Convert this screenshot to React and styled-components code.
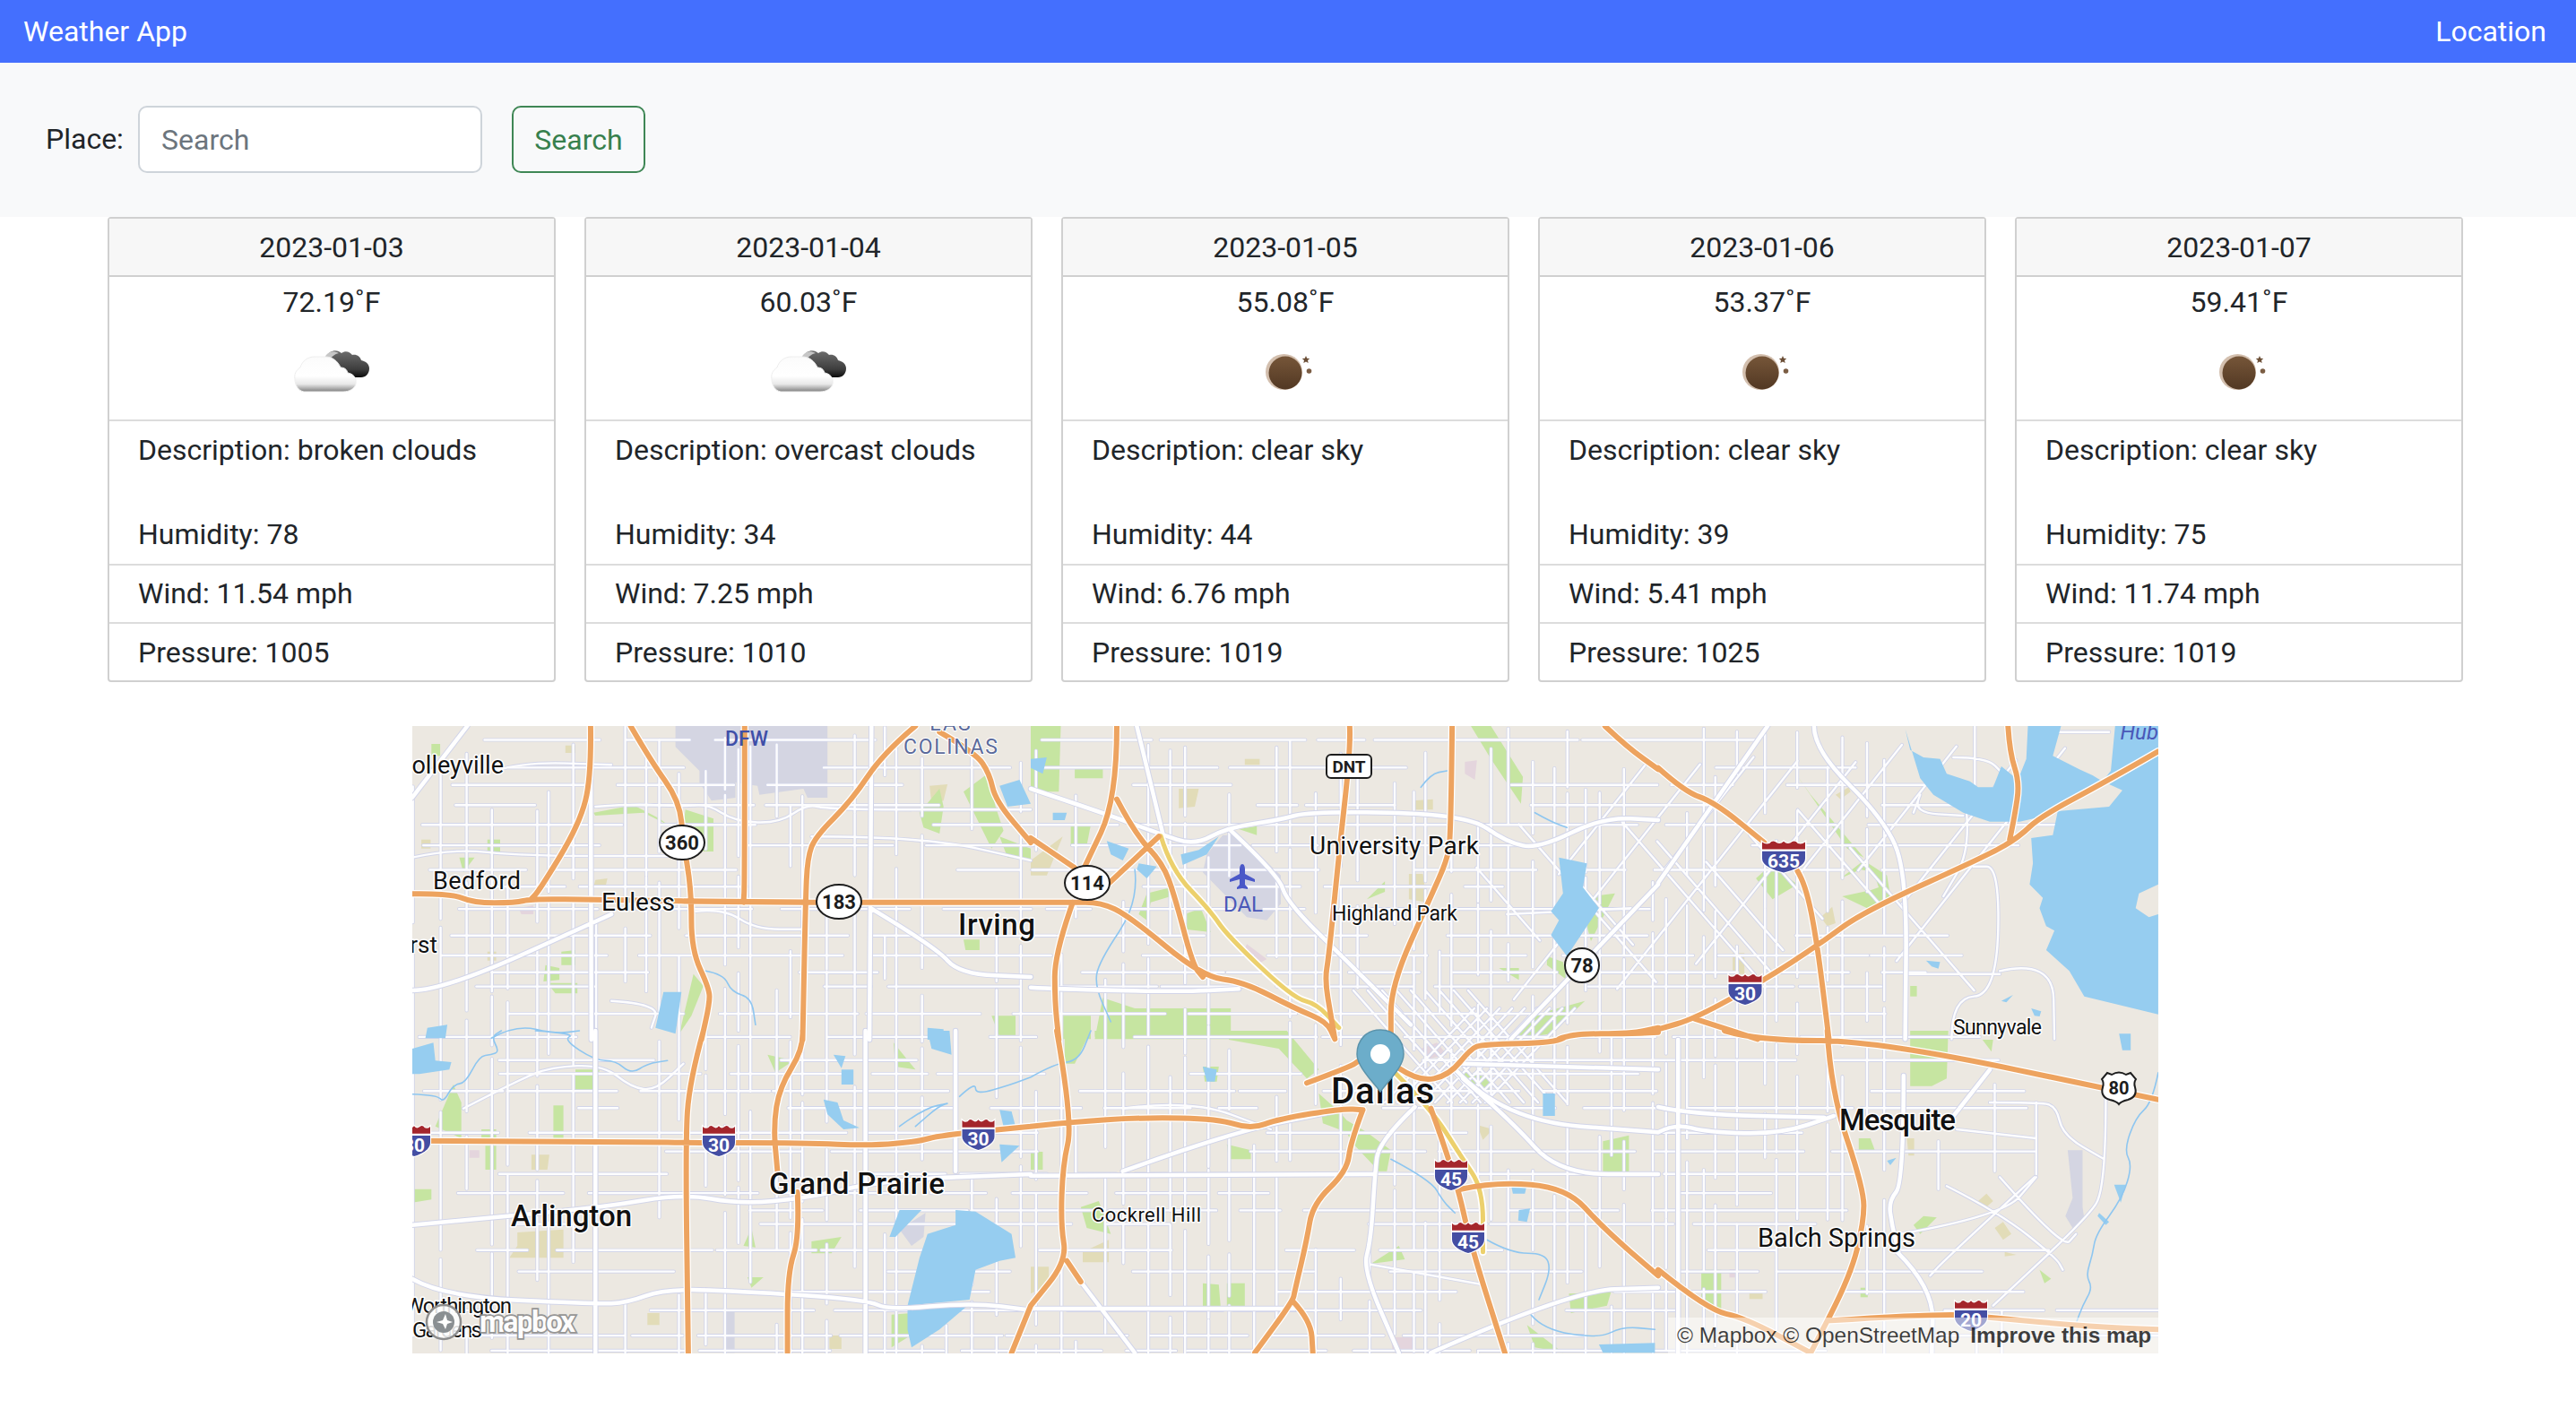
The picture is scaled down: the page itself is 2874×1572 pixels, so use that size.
import React from "react";
import styled, { createGlobalStyle } from "styled-components";

const GlobalStyle = createGlobalStyle`
  html, body {
    margin: 0;
    background: #fff;
    color: #212529;
    font-family: "Roboto", "Liberation Sans", sans-serif;
    font-size: 32px;
  }
  * { box-sizing: border-box; }
`;

const Navbar = styled.nav`
  height: 70px;
  padding: 0 33px 0 26px;
  display: flex;
  align-items: center;
  justify-content: space-between;
  background: #446ffe;
  color: #fff;
`;

const SearchBar = styled.form`
  height: 172px;
  padding: 48px 0 0 51px;
  display: flex;
  align-items: flex-start;
  background: #f8f9fa;
`;

const PlaceLabel = styled.label`
  width: 103px;
  line-height: 75px;
`;

const SearchInput = styled.input`
  width: 384px;
  height: 75px;
  margin-right: 33px;
  padding: 0 24px;
  border: 2px solid #ced4da;
  border-radius: 10px;
  background: #fff;
  font: inherit;
  color: #212529;
  &::placeholder { color: #6c757d; opacity: 1; }
`;

const SearchButton = styled.button`
  width: 149px;
  height: 75px;
  padding: 0;
  border: 2px solid #3f8755;
  border-radius: 10px;
  background: transparent;
  font: inherit;
  color: #37804d;
`;

const Forecast = styled.section`
  padding-left: 120px;
  display: flex;
  gap: 32px;
`;

const Card = styled.article`
  width: 500px;
  border: 2px solid #d0d0d0;
  border-radius: 4px;
`;

const CardHeader = styled.header`
  height: 65px;
  display: flex;
  align-items: center;
  justify-content: center;
  background: #f7f7f7;
  border-bottom: 2px solid #d0d0d0;
`;

const TempBlock = styled.div`
  height: 159px;
  padding-top: 6px;
  display: flex;
  flex-direction: column;
  align-items: center;
`;

const Temp = styled.div`
  line-height: 44px;
`;

const Row = styled.div`
  height: ${p => p.$height}px;
  padding: 0 32px ${p => p.$nudge || 0}px;
  display: flex;
  align-items: center;
  border-top: 2px solid #dcdcdc;
`;

const DetailsRow = styled.div`
  height: 161px;
  padding: 10px 32px 0;
  border-top: 2px solid #dcdcdc;
`;

const Description = styled.div`
  height: 94px;
  line-height: 44px;
`;

const Humidity = styled.div`
  line-height: 44px;
`;

const MapFrame = styled.div`
  position: relative;
  width: 1948px;
  height: 700px;
  margin: 49px 0 62px 460px;
  overflow: hidden;
  background: #ece8e1;
`;

const MapSvg = styled.svg`
  display: block;
`;

const MapLabel = styled.text`
  font-family: "Roboto", "Liberation Sans", sans-serif;
  font-size: ${p => p.$size}px;
  font-weight: ${p => p.$weight || 400};
  fill: ${p => p.$color || "#111"};
  stroke: #fff;
  stroke-width: ${p => p.$halo ?? 3}px;
  stroke-linejoin: round;
  paint-order: stroke;
`;

const ShieldText = styled.text`
  font-family: "Roboto", "Liberation Sans", sans-serif;
  font-size: ${p => p.$size}px;
  font-weight: 700;
  fill: ${p => p.$color};
  text-anchor: middle;
`;

const LogoText = styled.text`
  font-family: "Roboto", "Liberation Sans", sans-serif;
  font-size: 33px;
  font-weight: 700;
  fill: #fff;
  stroke: #8d8d8d;
  stroke-width: 3.5px;
  paint-order: stroke;
  opacity: 0.9;
`;

const Attribution = styled.div`
  position: absolute;
  right: 0;
  bottom: 0;
  width: 547px;
  height: 40px;
  padding-left: 10px;
  display: flex;
  align-items: center;
  gap: 12px;
  background: rgba(255, 255, 255, 0.5);
  font-family: "Liberation Sans", Arial, sans-serif;
  font-size: 24.4px;
  color: rgba(0, 0, 0, 0.75);
  white-space: nowrap;
`;

const ImproveLink = styled.span`
  font-weight: 700;
`;

const forecast = [
  { date: "2023-01-03", temp: "72.19", icon: "clouds", desc: "broken clouds", hum: 78, wind: "11.54", press: 1005 },
  { date: "2023-01-04", temp: "60.03", icon: "clouds", desc: "overcast clouds", hum: 34, wind: "7.25", press: 1010 },
  { date: "2023-01-05", temp: "55.08", icon: "moon", desc: "clear sky", hum: 44, wind: "6.76", press: 1019 },
  { date: "2023-01-06", temp: "53.37", icon: "moon", desc: "clear sky", hum: 39, wind: "5.41", press: 1025 },
  { date: "2023-01-07", temp: "59.41", icon: "moon", desc: "clear sky", hum: 75, wind: "11.74", press: 1019 }
];

const WeatherIcon = ({ kind, id }) => (
  <svg width="110" height="109" viewBox="0 0 110 109">
    <defs>
      <linearGradient id={`cloud${id}`} x1="0" y1="0" x2="0" y2="1">
        <stop offset="0" stopColor="#fbfbfb" />
        <stop offset="0.55" stopColor="#fff" />
        <stop offset="0.78" stopColor="#e9e9e9" />
        <stop offset="0.86" stopColor="#c4c4c4" />
        <stop offset="1" stopColor="#7f7f7f" />
      </linearGradient>
      <linearGradient id={`dark${id}`} x1="0" y1="0" x2="0" y2="1">
        <stop offset="0" stopColor="#6e6e6e" />
        <stop offset="0.7" stopColor="#3d3d3d" />
        <stop offset="1" stopColor="#0c0c0c" />
      </linearGradient>
      <linearGradient id={`moon${id}`} x1="0" y1="0" x2="0" y2="1">
        <stop offset="0" stopColor="#765639" />
        <stop offset="1" stopColor="#523823" />
      </linearGradient>
    </defs>
    {kind === "clouds" ? (
      <>
        <path
          d="M53 34c5-3 10-2 13 1 4-3 9-2 12 2 5-1 9 2 10 6 5 1 9 4 9 9 0 6-4 10-9 10H68c-4-1-8-5-8-10-3-2-7-1-10 2-2 1-4 2-5 1 0-8 3-16 8-21z"
          fill={`url(#dark${id})`}
        />
        <path d="M49 37c3-4 9-5 14-2-5 1-10 5-12 12l-5 6c-1-6 0-12 3-16z" fill="#c6c6c6" />
        <path
          d="M36 39c-8 0-14 5-16 12-5 3-7 8-6 13 0 7 4 13 10 14h44c6 0 13-3 14-9 1-7-3-11-9-12-1-4-4-6-8-6-3-7-9-12-17-12-4 0-8 0-12 0z"
          fill={`url(#cloud${id})`}
          stroke="#eeeeee"
          strokeWidth="1"
        />
      </>
    ) : (
      <>
        <ellipse cx="53.5" cy="56" rx="20.5" ry="20" fill="#d3bfae" />
        <ellipse cx="55" cy="57" rx="18.5" ry="18.5" fill={`url(#moon${id})`} />
        <path d="M78 38l1.2 2.8 3 .3-2.2 2 .7 3-2.7-1.6-2.7 1.6.7-3-2.2-2 3-.3z" fill="#6b4e36" />
        <circle cx="81.5" cy="55" r="2.8" fill="#7b5d44" />
      </>
    )}
  </svg>
);

/* reference crops the map was traced from: origin x, origin y, scale x, scale y */
const CROPS = {
  A: [450, 800, 2.24, 3],
  B: [1150, 800, 2.24, 3],
  C: [1850, 800, 2.703, 3],
  D: [450, 1150, 2.24, 3],
  E: [1150, 1150, 2.24, 3],
  F: [1850, 1150, 2.703, 3]
};

const parsePoints = (crop, text) => {
  const [ox, oy, sx, sy] = CROPS[crop];
  return text.split(" ").map(pair => {
    const [x, y] = pair.split(",").map(Number);
    return [+(ox + x / sx).toFixed(1), +(oy + y / sy).toFixed(1)];
  });
};

const roadPath = ([crop, text]) => {
  const pts = parsePoints(crop, text);
  let d = `M${pts[0]}`;
  for (let i = 1; i < pts.length - 1; i++) {
    const mx = (pts[i][0] + pts[i + 1][0]) / 2;
    const my = (pts[i][1] + pts[i + 1][1]) / 2;
    d += `Q${pts[i]} ${mx},${my}`;
  }
  return d + `L${pts[pts.length - 1]}`;
};

const areaPath = ([crop, text]) => `M${parsePoints(crop, text).join("L")}Z`;

const motorways = [
  ["A", "22,592 120,590 175,622 280,622 320,608 490,612 900,620 1568,620"],
  ["A", "468,30 470,200 440,360 340,580 320,608"],
  ["A", "568,30 620,150 690,280 700,420 720,580 720,780 765,910 765,960 745,1080"],
  ["A", "853,30 853,560 850,620"],
  ["A", "1280,30 1200,120 1120,280 1030,400 1010,470 1005,620 998,1080"],
  ["A", "1340,50 1430,120 1465,190 1480,280 1568,420"],
  ["B", "0,620 100,620 175,620 245,665 430,870 530,885 660,975 740,1020 760,1078"],
  ["B", "0,405 110,505"],
  ["B", "215,30 215,275 135,500"],
  ["B", "215,275 260,390 330,490 360,600 405,830 430,870"],
  ["B", "320,400 180,575"],
  ["B", "105,620 60,790 60,950 70,1080"],
  ["B", "797,30 800,100 770,460 745,800 735,880 750,1000 760,1078"],
  ["B", "1053,30 1050,400 1040,480 1000,600 900,900 900,1078"],
  ["B", "1435,30 1490,100 1568,175"],
  ["B", "1320,1078 1350,1060 1500,1060 1568,1040"],
  ["C", "0,170 80,250 170,285 320,420"],
  ["C", "420,515 445,560 480,760 515,1078"],
  ["C", "1508,115 1360,210 1150,335 1090,400 1000,460 620,650 480,765 320,880 110,1010 0,1045"],
  ["C", "110,1010 300,1078"],
  ["C", "1055,30 1060,120 1090,220 1075,330 1060,410"],
  ["D", "22,368 620,372 700,375 1000,375 1170,385 1290,370 1340,350 1568,320"],
  ["D", "750,0 715,170 705,370 712,1078"],
  ["D", "998,0 1000,60 940,190 925,320 935,470"],
  ["D", "985,540 990,690 960,810 960,1078"],
  ["D", "1568,920 1520,1078"],
  ["E", "65,0 105,305 80,450 75,650 90,770 0,920"],
  ["E", "90,770 125,840"],
  ["E", "0,320 100,305 280,290 470,295 550,330 620,295 780,260 830,265"],
  ["E", "830,265 800,370 790,470 705,580 690,700 660,870 655,905 560,1078"],
  ["E", "655,905 700,970 705,1078"],
  ["E", "1000,260 1060,480 1100,720 1185,1078"],
  ["E", "1075,530 1160,505 1340,525 1430,660 1568,820"],
  ["E", "690,175 800,120 820,100"],
  ["E", "920,125 970,170 1045,150 1100,60 1130,45 1310,40 1350,10 1500,10 1568,5"],
  ["F", "200,0 300,33 660,33 1508,230"],
  ["F", "510,0 520,200 620,530 620,640 580,820 460,1078"],
  ["F", "0,800 150,935 260,960 460,1078"],
  ["F", "520,970 860,945 1000,960 1300,990 1508,1000"]
];

const tollways = [
  ["B", "325,398 350,510 450,650 490,730 655,940 715,960 770,1040"],
  ["E", "910,140 1000,260 1075,420 1130,530 1130,740"]
];

const arterials = [
  ["A", "468,30 470,1080"],
  ["A", "1170,30 1165,1080"],
  ["A", "22,915 100,915 520,660"],
  ["A", "22,270 160,30"],
  ["A", "1168,640 1330,770 1390,860 1568,870"],
  ["B", "0,240 190,325 320,390 410,430 490,370 620,345 700,315 1090,325 1190,420 1270,440 1430,335 1568,345"],
  ["B", "265,30 330,390"],
  ["B", "500,380 620,530 640,620 800,830 950,1030"],
  ["B", "0,905 60,910 370,920 520,910"],
  ["B", "1568,560 1200,1078"],
  ["C", "330,30 0,555"],
  ["C", "470,30 470,110 680,340 750,520 745,1078"],
  ["D", "22,650 260,620 500,590 700,545 840,580 1010,560 1200,500 1568,480"],
  ["D", "22,830 100,890 480,915 560,910 650,865 830,870 1160,900 1210,935 1420,910 1568,935"],
  ["D", "480,0 480,1078"],
  ["D", "1155,0 1155,1078"],
  ["D", "1380,0 1380,470"],
  ["E", "0,485 860,480"],
  ["E", "1065,135 1180,300 1568,340"],
  ["E", "230,470 500,340 760,270"],
  ["E", "960,255 870,370 860,480 850,700 830,800 920,1078"],
  ["E", "0,930 660,930"],
  ["E", "1000,1078 1350,870 1568,860"],
  ["E", "1080,110 1568,130"],
  ["E", "125,840 260,1078"],
  ["E", "1080,160 1200,300 1320,480 1568,480"],
  ["F", "0,255 100,280 500,290"],
  ["F", "0,340 50,310 150,340 370,345 530,285"],
  ["F", "60,30 60,1078"],
  ["F", "720,740 830,860 825,1078"],
  ["F", "740,150 740,510 695,570 705,650 725,740"],
  ["F", "1000,130 880,300"]
];

const localRoads = [
  ["F", "870,520 1030,610 1200,760 1220,800"],
  ["F", "1000,240 1140,240 1200,250 1220,350 1345,430"],
  ["F", "1350,230 1350,530 1290,630 1010,920"],
  ["F", "730,680 1040,620 1140,490"],
  ["F", "1030,490 1220,730 1260,680"],
  ["F", "1135,490 870,760 820,820"],
  ["F", "900,330 1140,360"],
  ["F", "1015,180 1015,470"],
  ["F", "1140,240 1140,480"],
  ["F", "845,370 845,530"],
  ["C", "1030,850 1190,810 1195,1078"],
  ["C", "750,860 1030,860"],
  ["C", "885,1078 885,940 1020,930 1030,500 950,500"],
  ["C", "770,320 800,230 770,320 920,330"],
  ["C", "890,135 990,135 1040,190"],
  ["C", "930,320 940,450 860,600"],
  ["C", "1180,50 1360,50"],
  ["C", "955,30 955,300"],
  ["A", "22,470 120,440 300,465 660,465"],
  ["A", "480,300 575,290 700,300 760,290 830,350 940,355 1010,290 1060,310 1568,310"],
  ["A", "230,180 300,150 520,160"],
  ["A", "730,650 800,640 880,710 1000,710"],
  ["A", "520,950 640,960 620,1040"],
  ["A", "1020,400 1300,400 1568,480"],
  ["B", "1190,660 1500,640"],
  ["E", "840,780 1130,850"],
  ["E", "230,260 400,230 600,330"],
  ["D", "150,260 280,170 370,120 500,115 570,190 630,200 700,110"]
];

const diagonalRoads = (() => {
  let seed = 991;
  const rnd = () => {
    seed = (seed * 16807) % 2147483647;
    return seed / 2147483647;
  };
  const out = [];
  // east Dallas runs at an angle, two crossing families of streets
  for (let k = 0; k < 9; k++) {
    const t = 0.25 + rnd() * 0.3;
    out.push(`M${1830 + k * 58 + rnd() * 14},${830 + rnd() * 30}l${-190 * t * 2},${240 * t * 2}`);
    out.push(`M${1640 + k * 52 + rnd() * 14},${900 + rnd() * 70}l${200 * t * 1.4},${230 * t * 1.4}`);
  }
  // downtown is dense
  for (let k = 0; k < 9; k++) {
    out.push(`M${1510 + k * 16},1105l${110},${125}`);
    out.push(`M${1645 + k * 14},1125l${-100},${105}`);
  }
  return out;
})();

const gridRoads = (() => {
  let seed = 4711;
  const rnd = () => {
    seed = (seed * 16807) % 2147483647;
    return seed / 2147483647;
  };
  const out = [];
  const isSparse = (x, y) => (x > 2110 && y < 1450) || (x > 1950 && y > 1300 && rnd() > 0.5);
  for (let x = 460 + rnd() * 20; x < 2408; x += 12 + rnd() * 22) {
    let y = 810 + rnd() * 100;
    while (y < 1510) {
      const len = 40 + rnd() * 170;
      if (rnd() > 0.22 && !isSparse(x, y)) out.push(`M${x.toFixed(1)},${y.toFixed(1)}V${(y + len).toFixed(1)}`);
      y += len + rnd() * 36;
    }
  }
  for (let y = 815 + rnd() * 20; y < 1510; y += 12 + rnd() * 20) {
    let x = 460 + rnd() * 120;
    while (x < 2408) {
      const len = 40 + rnd() * 190;
      if (rnd() > 0.24 && !isSparse(x, y)) out.push(`M${x.toFixed(1)},${y.toFixed(1)}H${(x + len).toFixed(1)}`);
      x += len + rnd() * 44;
    }
  }
  return out;
})();

const parks = [
  ["A", "210,410 242,410 242,455 210,455"],
  ["A", "140,470 178,470 150,520"],
  ["A", "475,320 575,295 640,340 660,360 600,320 480,330"],
  ["A", "705,310 775,340 775,450 750,450 700,360"],
  ["A", "355,830 390,840 390,880 350,885"],
  ["A", "360,890 435,890 435,925 380,925"],
  ["A", "395,785 430,780 430,830 395,830"],
  ["A", "1290,320 1340,240 1350,300 1340,390 1300,370"],
  ["A", "1400,250 1460,190 1480,300 1500,380 1470,440"],
  ["A", "1490,400 1568,440 1568,480 1510,470"],
  ["A", "1400,745 1440,745 1440,780 1405,780"],
  ["A", "1470,1000 1530,1000 1530,1070 1490,1070"],
  ["A", "725,860 750,900 720,1000 690,1060"],
  ["A", "70,90 92,90 92,130 70,130"],
  ["B", "0,30 75,30 70,250 0,250"],
  ["B", "110,170 180,170 180,205 110,205"],
  ["B", "100,360 150,360 140,430 100,430"],
  ["B", "385,660 425,640 450,720 385,710"],
  ["B", "520,375 565,365 565,395"],
  ["B", "840,610 885,550 885,585"],
  ["B", "1100,30 1150,30 1230,200 1225,290 1150,140"],
  ["B", "1170,840 1220,840 1220,880"],
  ["B", "1290,800 1330,820 1340,880 1290,830"],
  ["B", "1400,600 1460,590 1400,750 1390,700"],
  ["B", "1200,1078 1250,1000 1385,950 1300,1060 1220,1078"],
  ["B", "75,1000 150,1000 150,1078 75,1078"],
  ["B", "180,940 260,975 500,975 500,1078 160,1078"],
  ["B", "270,660 290,590 350,570 350,600 300,620 290,680"],
  ["C", "295,540 340,495 420,560 345,610"],
  ["C", "550,540 620,480 690,530 700,600 630,640 555,600 640,580 665,570 650,520 610,510"],
  ["C", "415,190 460,260 620,470 570,440"],
  ["C", "760,900 780,900 780,935 760,935"],
  ["D", "430,130 490,130 480,205 430,205"],
  ["D", "375,250 400,250 400,360 375,360"],
  ["D", "195,330 232,330 232,360 195,360"],
  ["D", "205,385 232,385 232,465 205,465"],
  ["D", "125,180 145,240 145,360 80,320"],
  ["D", "22,530 70,530 70,565 22,575"],
  ["D", "910,80 975,100 930,140"],
  ["D", "850,720 870,660 880,725"],
  ["D", "1020,705 1095,690 1070,745 1020,745"],
  ["D", "1225,40 1280,130 1230,120"],
  ["D", "860,825 900,825 870,860"],
  ["D", "1220,950 1270,945 1280,1010 1220,1060"],
  ["E", "85,0 150,0 110,110 85,110"],
  ["E", "160,0 370,0 370,20 160,20"],
  ["E", "380,0 490,0 490,25 380,25"],
  ["E", "495,0 640,0 720,130 690,160 620,60 495,30"],
  ["E", "720,210 770,270 790,300 840,340 900,400 890,470 870,470 800,370 790,340 730,310"],
  ["E", "1080,135 1150,160 1150,225 1100,200"],
  ["E", "430,120 470,120 465,170 435,170"],
  ["E", "0,405 30,405 30,465 0,465"],
  ["E", "490,380 550,400 550,430 495,430"],
  ["E", "125,590 170,570 200,680 140,660"],
  ["E", "430,845 470,850 475,935 430,930"],
  ["E", "490,845 535,845 535,925 490,925"],
  ["E", "850,780 920,720 935,765"],
  ["E", "1430,370 1495,350 1495,480 1430,480"],
  ["E", "1345,880 1450,875 1440,920 1350,945"],
  ["E", "1240,985 1330,1078 1260,1060"],
  ["F", "760,0 875,0 870,160 825,185 760,185"],
  ["F", "978,30 1010,30 1005,70"],
  ["F", "130,800 190,800 190,935 130,890"],
  ["F", "605,360 640,360 655,405 605,405"],
  ["F", "800,620 840,625 790,680 770,650"],
  ["F", "1150,800 1185,830 1165,845"],
  ["F", "610,860 632,860 632,892 610,892"]
];

const tans = [
  ["A", "45,410 68,410 68,440 45,440"],
  ["A", "210,785 232,785 232,815 210,815"],
  ["A", "1315,230 1360,225 1350,280 1320,290"],
  ["A", "405,95 430,95 430,120 405,120"],
  ["A", "480,545 510,540 505,570 475,570"],
  ["B", "0,480 80,400 40,530 0,530"],
  ["B", "370,240 420,240 410,300 370,305"],
  ["B", "535,140 572,140 572,160 535,160"],
  ["B", "955,280 1005,275 1005,310 955,310"],
  ["B", "945,525 980,525 990,620 945,610"],
  ["C", "225,790 260,790 260,860 225,860"],
  ["C", "490,670 525,635 535,690 510,700"],
  ["C", "535,260 575,235 580,250 550,275"],
  ["D", "320,415 365,415 360,465 320,465"],
  ["D", "285,675 400,665 400,760 265,760 285,720"],
  ["D", "610,945 640,945 640,985 610,985"],
  ["D", "1065,1020 1095,1020 1095,1065 1065,1065"],
  ["E", "130,740 195,700 195,775 130,775"],
  ["E", "0,790 45,790 45,850 0,880"],
  ["E", "1115,315 1155,330 1130,365"],
  ["F", "965,570 990,545 1010,570 985,595"],
  ["F", "1015,660 1040,640 1065,680 1040,700"],
  ["F", "1045,740 1080,750 1045,755"],
  ["F", "750,360 772,360 772,418 755,418"],
  ["F", "275,868 315,868 315,898 275,898"]
];

const pinks = [
  ["A", "288,640 325,630 325,660 295,660"],
  ["B", "1085,150 1115,145 1110,210 1085,190"],
  ["B", "540,760 590,810 570,825 530,790"],
  ["D", "165,400 190,400 190,425 165,425"],
  ["E", "900,1025 955,1025 960,1078 905,1078"],
  ["E", "975,60 1015,40 1040,80 990,95"],
  ["F", "215,798 232,798 232,826 215,826"]
];

const airports = [
  ["A", "730,30 1060,30 1060,270 1010,270 1000,240 890,260 885,230 830,220 830,270 770,280 740,220 740,180 680,100 680,30"],
  ["B", "480,395 520,395 625,530 625,625 590,680 540,670 430,520 440,460"],
  ["D", "800,940 828,940 828,1078 800,1078"],
  ["D", "1240,665 1305,610 1300,690 1270,720"],
  ["F", "1235,400 1280,400 1280,590 1285,630 1255,670 1228,620 1250,560"]
];

const waters = [
  ["C", "745,40 760,110 800,135 850,140 870,190 940,215 965,235 1010,235 1035,165 1085,210 1110,140 1115,30 1215,30 1190,130 1270,175 1310,195 1340,215 1365,180 1378,30 1508,30 1508,110 1360,210 1150,335 1090,350 1000,350 920,320 830,260 790,205"],
  ["C", "1508,130 1360,225 1400,245 1360,300 1205,315 1190,395 1125,405 1130,490 1120,560 1160,605 1150,640 1170,700 1195,715 1170,780 1240,850 1285,935 1508,995 1508,660 1480,670 1440,640 1450,590 1508,560"],
  ["C", "808,815 850,820 845,842 825,835"],
  ["C", "1035,950 1070,930 1050,955"],
  ["C", "1125,975 1155,985 1150,1002 1135,1000"],
  ["B", "1320,470 1390,490 1380,570 1420,640 1340,800 1300,730 1320,680 1300,650 1330,590"],
  ["B", "375,460 420,445 470,400 440,460 380,495"],
  ["B", "190,415 245,440 230,480 200,460"],
  ["B", "270,490 315,500 290,540 265,510"],
  ["B", "0,140 40,135 30,190 0,170"],
  ["B", "55,320 90,320 85,345 55,345"],
  ["A", "650,920 695,920 680,1060 630,1040"],
  ["A", "60,1040 110,1030 105,1075 55,1075"],
  ["A", "1490,230 1540,210 1568,290 1510,300"],
  ["A", "1310,1040 1350,1045 1350,1080 1310,1080"],
  ["D", "1380,600 1430,605 1520,680 1530,760 1490,770 1430,800 1415,900 1260,920 1290,760 1310,680 1380,650"],
  ["D", "1260,925 1410,920 1340,1000 1270,1060 1260,1000"],
  ["D", "1240,600 1295,600 1230,690 1215,690"],
  ["D", "22,60 75,40 80,100 120,105 115,130 40,145 22,145"],
  ["D", "1310,0 1365,0 1370,80 1320,60"],
  ["D", "1075,80 1105,85 1095,125"],
  ["D", "1095,130 1125,130 1125,180 1095,180"],
  ["D", "1050,230 1085,240 1100,300 1140,325 1100,330 1060,280"],
  ["D", "1490,380 1540,385 1495,440"],
  ["D", "1490,265 1520,270 1530,320 1500,320"],
  ["E", "1280,210 1310,210 1310,285 1280,285"],
  ["E", "430,120 465,130 460,170 440,170"],
  ["E", "1200,515 1240,515 1235,545 1205,545"],
  ["E", "1220,600 1248,595 1240,640 1218,635"],
  ["E", "1420,1050 1560,1045 1560,1078 1430,1078"],
  ["F", "1375,515 1410,515 1395,575"],
  ["F", "1330,610 1360,640 1350,650 1325,620"],
  ["F", "690,435 718,425 700,450"],
  ["F", "1390,10 1425,10 1425,65 1400,65"]
];

const rivers = [
  ["D", "22,212 85,215 100,240 125,180 155,175 190,85 220,80 240,70 220,20 245,0"],
  ["D", "330,0 430,10 400,30 480,100 530,100 570,145 610,110 660,100"],
  ["D", "1390,220 1430,170 1430,215 1520,180 1568,155"],
  ["D", "1240,320 1300,260 1370,240 1340,250 1280,320"],
  ["E", "0,155 60,110 120,100 150,0"],
  ["E", "900,430 1000,500 1030,570 1060,610"],
  ["E", "1140,700 1200,745 1285,745 1300,800 1270,900"],
  ["E", "1250,950 1280,1000 1420,1030 1480,990 1560,1000"],
  ["F", "1508,140 1490,240 1440,290 1405,400 1430,450 1400,560 1320,680 1310,750 1290,820 1310,860 1280,920 1260,980"],
  ["B", "260,510 270,620 170,820 160,900 200,1020"],
  ["B", "975,235 1000,190 1040,180"],
  ["B", "1260,320 1300,350 1340,370"],
  ["A", "755,850 800,860 820,920 870,940 880,1030"],
  ["A", "220,1075 280,1030 380,1060 440,1050"]
];

const Interstate = ({ x, y, w, h, label, size = 21 }) => (
  <g transform={`translate(${x} ${y})`}>
    <g transform={`scale(${w / 100} ${h / 100})`}>
      <path
        d="M-50,-16V-42Q-42,-34 -33,-38Q-25,-50 -16,-40Q-8,-34 0,-44Q8,-34 16,-40Q25,-50 33,-38Q42,-34 50,-42V8C50,28 25,42 0,50C-25,42 -50,28 -50,8Z"
        fill="#fff"
        stroke="#fff"
        strokeWidth="6"
      />
      <path d="M-50,-20V-42Q-42,-34 -33,-38Q-25,-50 -16,-40Q-8,-34 0,-44Q8,-34 16,-40Q25,-50 33,-38Q42,-34 50,-42V-20Z" fill="#a4262c" />
      <path d="M-50,-14H50V8C50,28 25,42 0,50C-25,42 -50,28 -50,8Z" fill="#444ea3" />
    </g>
    <ShieldText y={h * 0.14 + size * 0.36} $size={size} $color="#fff">
      {label}
    </ShieldText>
  </g>
);

const RoundShield = ({ x, y, rx, ry, label }) => (
  <g transform={`translate(${x} ${y})`}>
    <ellipse rx={rx} ry={ry} fill="#fff" stroke="#1d1d1d" strokeWidth="2" />
    <ShieldText y="8" $size="22" $color="#1d1d1d">
      {label}
    </ShieldText>
  </g>
);

const WeatherMap = () => (
  <MapSvg width="1948" height="700" viewBox="460 810 1948 700">
    <g>
      {airports.map((a, i) => (
        <path key={i} d={areaPath(a)} fill="#d4d5e2" />
      ))}
      {tans.map((a, i) => (
        <path key={i} d={areaPath(a)} fill="#e2dcb8" />
      ))}
      {pinks.map((a, i) => (
        <path key={i} d={areaPath(a)} fill="#e4d5dd" />
      ))}
      {parks.map((a, i) => (
        <path key={i} d={areaPath(a)} fill="#c6e5a1" />
      ))}
    </g>
    <g fill="none" strokeLinecap="round" strokeLinejoin="round">
      <path d={[...gridRoads, ...diagonalRoads].join("")} stroke="#d2d5e9" strokeWidth="4.2" />
      <path d={localRoads.map(roadPath).join("")} stroke="#d2d5e9" strokeWidth="4.2" />
      <path d={[...gridRoads, ...diagonalRoads].join("")} stroke="#fdfdfe" strokeWidth="2.4" />
      <path d={localRoads.map(roadPath).join("")} stroke="#fdfdfe" strokeWidth="2.4" />
    </g>
    <g fill="#96cdf0">
      {waters.map((a, i) => (
        <path key={i} d={areaPath(a)} />
      ))}
    </g>
    <g fill="none" strokeLinecap="round" strokeLinejoin="round">
      <path d={rivers.map(roadPath).join("")} stroke="#8ec6f0" strokeWidth="1.6" />
      <path d={arterials.map(roadPath).join("")} stroke="#d2d5e9" strokeWidth="6.5" />
      <path d={arterials.map(roadPath).join("")} stroke="#fff" strokeWidth="4.5" />
      <path d={[...motorways, ...tollways].map(roadPath).join("")} stroke="#fff" strokeWidth="8.5" />
      <path d={tollways.map(roadPath).join("")} stroke="#ecd06c" strokeWidth="5" />
      <path d={motorways.map(roadPath).join("")} stroke="#eda35f" strokeWidth="6" />
    </g>

    <RoundShield x="761" y="940" rx="25" ry="19" label="360" />
    <RoundShield x="936" y="1006" rx="25" ry="19" label="183" />
    <RoundShield x="1213" y="985" rx="25" ry="19" label="114" />
    <RoundShield x="1765" y="1077" rx="19" ry="19" label="78" />
    <g transform="translate(1505 855)">
      <rect x="-25" y="-13" width="50" height="26" rx="5" fill="#fff" stroke="#1d1d1d" strokeWidth="2" />
      <ShieldText y="7" $size="19" $color="#1d1d1d">
        DNT
      </ShieldText>
    </g>
    <Interstate x="1990" y="955" w="48" h="37" label="635" />
    <Interstate x="1947" y="1103" w="37" h="36" label="30" />
    <Interstate x="802" y="1272" w="36" h="36" label="30" />
    <Interstate x="1091.5" y="1265" w="36" h="36" label="30" />
    <Interstate x="462" y="1272" w="36" h="36" label="30" />
    <Interstate x="1619" y="1310" w="36" h="36" label="45" />
    <Interstate x="1638" y="1380" w="36" h="36" label="45" />
    <Interstate x="2199" y="1467" w="36" h="36" label="20" />
    <g transform="translate(2364 1214)">
      <path
        d="M-13,-17L-8,-15Q0,-20 8,-15L13,-17L19,-10C17,-7 17,-4 18,-1C20,6 17,11 10,13C6,14 2,15 0,18C-2,15 -6,14 -10,13C-17,11 -20,6 -18,-1C-17,-4 -17,-7 -19,-10Z"
        fill="#fff"
        stroke="#1d1d1d"
        strokeWidth="2"
      />
      <ShieldText y="7" $size="20" $color="#1d1d1d">
        80
      </ShieldText>
    </g>

    <MapLabel x="562" y="863" textAnchor="end" $size="27">Colleyville</MapLabel>
    <MapLabel x="833" y="832" textAnchor="middle" $size="23" $color="#3f4fa8" $weight="500" $halo="0">DFW</MapLabel>
    <MapLabel x="1061" y="815" textAnchor="middle" $size="23" $color="#5b6a9b" $halo="2" letterSpacing="2">LAS</MapLabel>
    <MapLabel x="1008" y="841" textLength="105" $size="23" $color="#5b6a9b" $halo="2">COLINAS</MapLabel>
    <MapLabel x="1387" y="1017" textAnchor="middle" $size="24" $color="#4a58b8" $halo="0">DAL</MapLabel>
    <path
      transform="translate(1386 979)"
      d="M0,-15C2,-15 3,-12 3,-9L3,-4L14,2L14,5L3,2L3,8L6,11L6,13L0,12L-6,13L-6,11L-3,8L-3,2L-14,5L-14,2L-3,-4L-3,-9C-3,-12 -2,-15 0,-15Z"
      fill="#4a58c8"
    />
    <MapLabel x="483" y="992" textLength="98" $size="27">Bedford</MapLabel>
    <MapLabel x="671" y="1016" textLength="82" $size="28">Euless</MapLabel>
    <MapLabel x="488" y="1063" textAnchor="end" $size="26">Hurst</MapLabel>
    <MapLabel x="1069" y="1043" textLength="86" $size="33" $weight="500">Irving</MapLabel>
    <MapLabel x="1461" y="953" textLength="189" $size="28">University Park</MapLabel>
    <MapLabel x="1486" y="1027" textLength="140" $size="23">Highland Park</MapLabel>
    <MapLabel x="2179" y="1154" textLength="99" $size="23">Sunnyvale</MapLabel>
    <MapLabel x="1485" y="1231" textLength="115" $size="40" $weight="500" $halo="4">Dallas</MapLabel>
    <MapLabel x="2052" y="1261" textLength="130" $size="33" $weight="500">Mesquite</MapLabel>
    <MapLabel x="1961" y="1391" textLength="176" $size="29">Balch Springs</MapLabel>
    <MapLabel x="1218" y="1363" textLength="122" $size="22">Cockrell Hill</MapLabel>
    <MapLabel x="858" y="1332" textLength="196" $size="33" $weight="500">Grand Prairie</MapLabel>
    <MapLabel x="570" y="1368" textLength="135" $size="33" $weight="500">Arlington</MapLabel>
    <MapLabel x="452" y="1465" textLength="119" $size="24">Worthington</MapLabel>
    <MapLabel x="460" y="1492" textLength="78" $size="24">Gardens</MapLabel>
    <MapLabel x="2408" y="825" textAnchor="end" $size="24" $color="#4a58b8" $halo="0" fontStyle="italic">Hub</MapLabel>

    <path
      d="M1540,1149C1524,1149 1514,1161 1514,1176C1514,1190 1531,1206 1540,1218C1549,1206 1566,1190 1566,1176C1566,1161 1556,1149 1540,1149Z"
      fill="#6cadca"
      stroke="#5b93ab"
      strokeWidth="1.5"
    />
    <circle cx="1540" cy="1176" r="11" fill="#fff" />

    <g transform="translate(495 1475)">
      <circle r="19" fill="#fff" fillOpacity="0.85" stroke="#8d8d8d" strokeWidth="2.5" />
      <circle r="12" fill="#8a8f92" />
      <path d="M2,-9L4,-2L10,0L4,2L2,8L-1,2L-8,0L-1,-2Z" fill="#fff" />
    </g>
    <LogoText x="535" y="1486" textLength="107">mapbox</LogoText>
  </MapSvg>
);

const App = () => (
  <>
    <GlobalStyle />
    <Navbar>
      <span>Weather App</span>
      <span>Location</span>
    </Navbar>
    <SearchBar onSubmit={e => e.preventDefault()}>
      <PlaceLabel>Place:</PlaceLabel>
      <SearchInput placeholder="Search" />
      <SearchButton type="submit">Search</SearchButton>
    </SearchBar>
    <Forecast>
      {forecast.map(day => (
        <Card key={day.date}>
          <CardHeader>{day.date}</CardHeader>
          <TempBlock>
            <Temp>{day.temp}˚F</Temp>
            <WeatherIcon kind={day.icon} id={day.date} />
          </TempBlock>
          <DetailsRow>
            <Description>Description: {day.desc}</Description>
            <Humidity>Humidity: {day.hum}</Humidity>
          </DetailsRow>
          <Row $height={65} $nudge={2}>Wind: {day.wind} mph</Row>
          <Row $height={65}>Pressure: {day.press}</Row>
        </Card>
      ))}
    </Forecast>
    <MapFrame>
      <WeatherMap />
      <Attribution>
        <span>© Mapbox © OpenStreetMap</span>
        <ImproveLink>Improve this map</ImproveLink>
      </Attribution>
    </MapFrame>
  </>
);

export default App;
